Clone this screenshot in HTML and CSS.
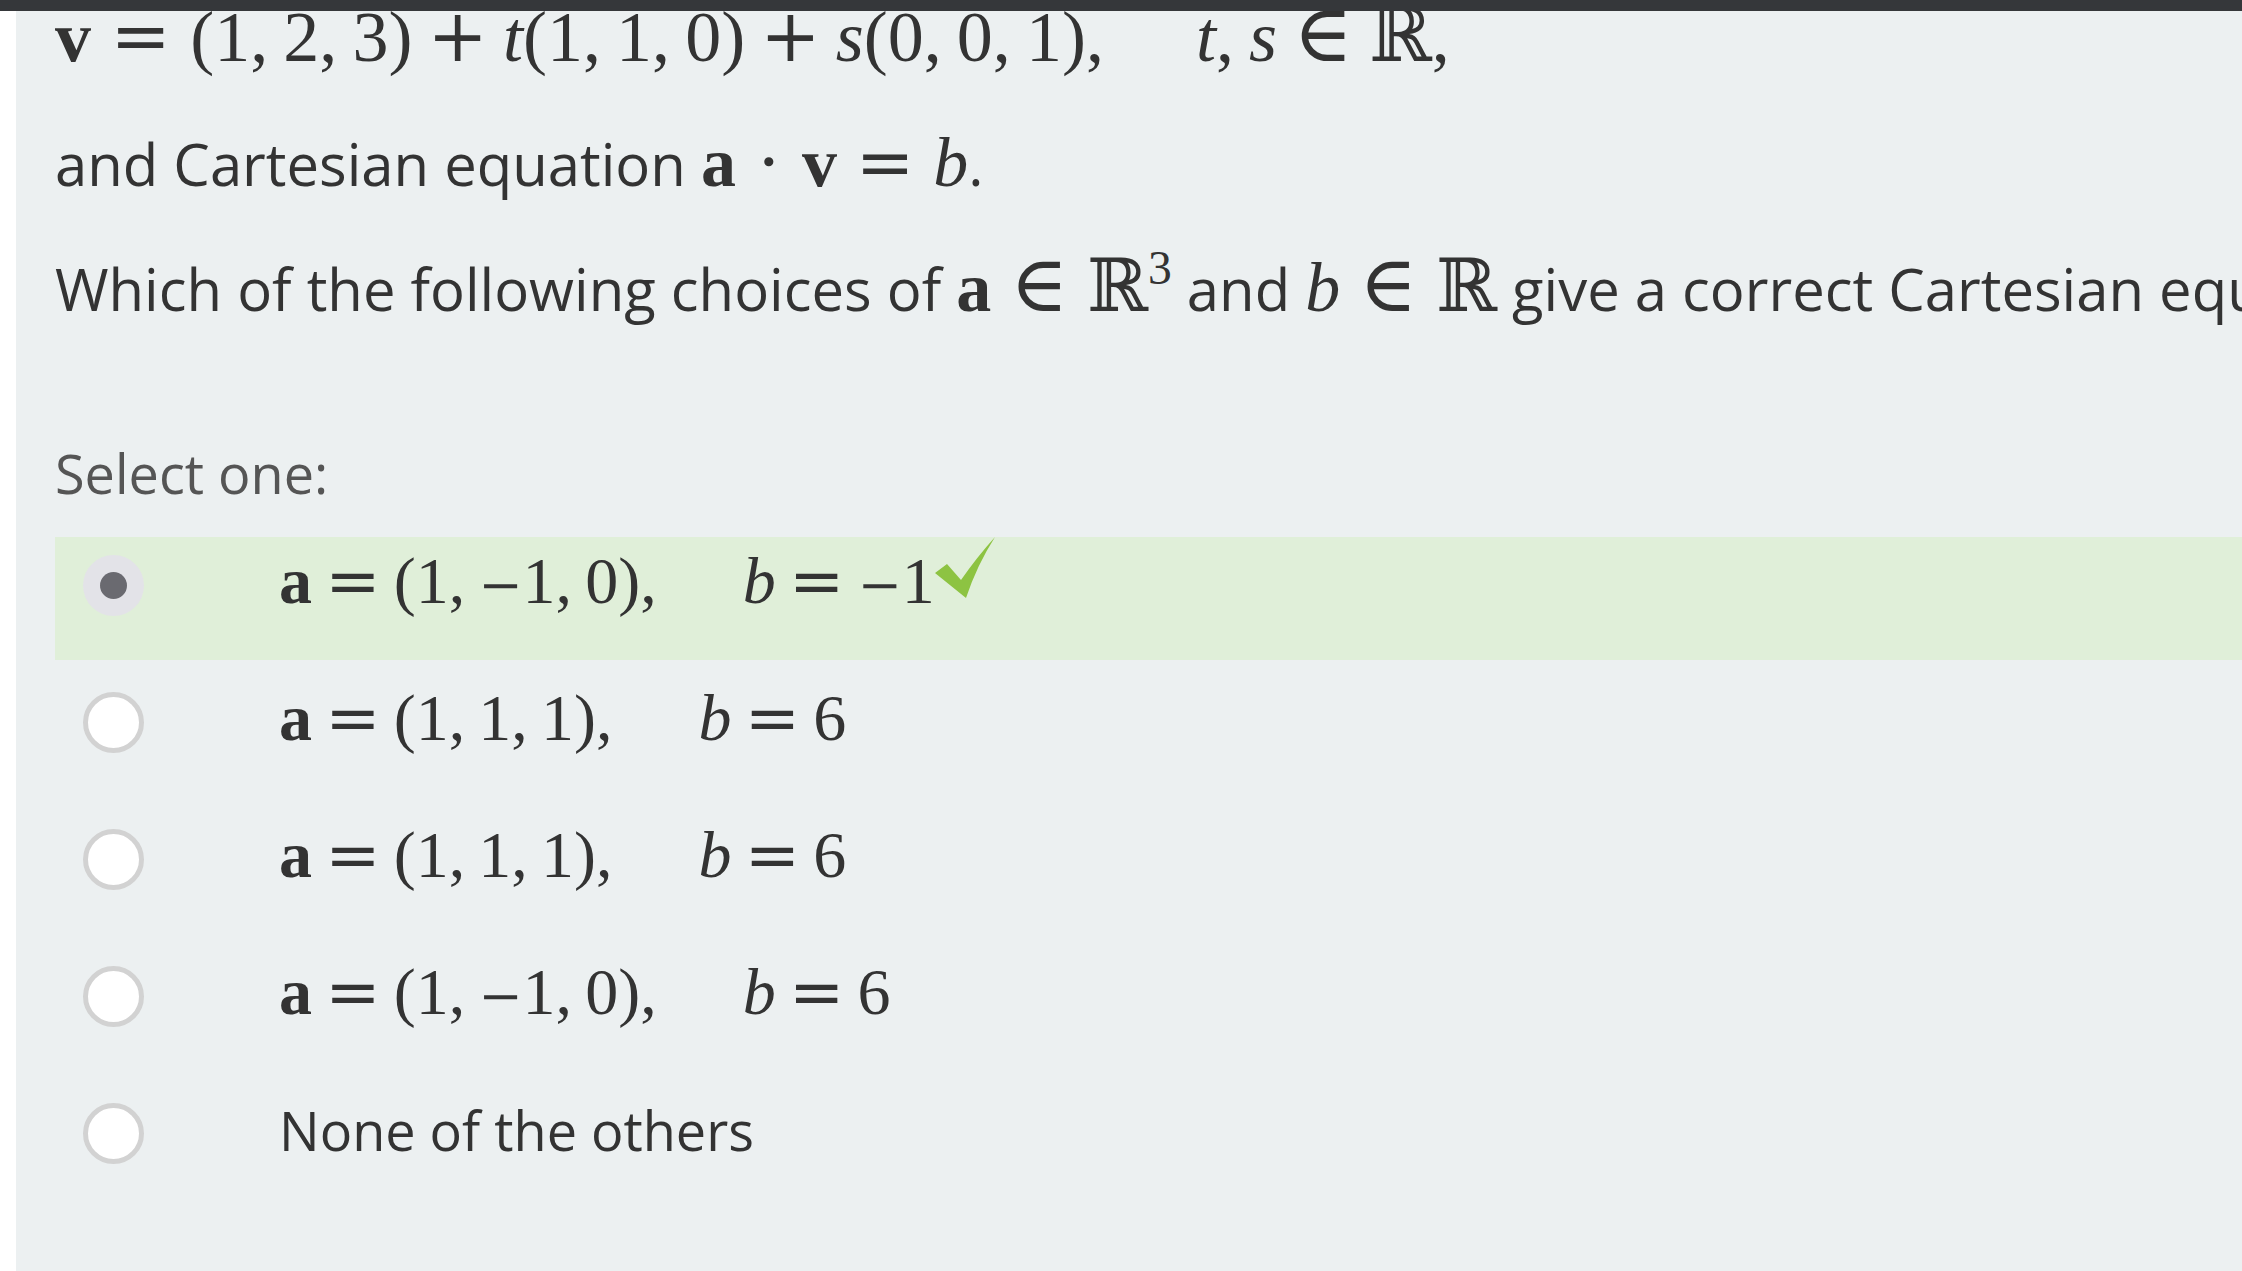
FILE: index.html
```html
<!DOCTYPE html>
<html lang="en">
<head>
<meta charset="utf-8">
<title>Question</title>
<link rel="stylesheet" href="styles.css">
</head>
<body>
<div class="topbar"></div>
<main class="content">
  <div class="qtext">
    <div class="display"><span class="mb">v</span><span class="rel">=</span>(1<span class="cm">,</span>2<span class="cm">,</span>3)<span class="bin">+</span><span class="mi">t</span>(1<span class="cm">,</span>1<span class="cm">,</span>0)<span class="bin">+</span><span class="mi">s</span>(0<span class="cm">,</span>0<span class="cm">,</span>1),<span class="quad"></span><span class="mi">t</span><span class="cm">,</span><span class="mi">s</span><span class="rel elem">∈</span><span class="dbl">ℝ</span>,</div>
    <p class="line">and Cartesian equation <span class="m mq"><span class="mb">a</span><span class="dot">⋅</span><span class="mb">v</span><span class="rel">=</span><span class="mi">b</span></span>.</p>
    <p class="line line3">Which of the following choices of <span class="m mq"><span class="mb">a</span><span class="rel elem">∈</span><span class="dbl">ℝ</span><span class="sup">3</span></span> and <span class="m mq"><span class="mi">b</span><span class="rel elem">∈</span><span class="dbl">ℝ</span></span> give a correct Cartesian equation?</p>
  </div>
  <div class="prompt">Select one:</div>
  <div class="answers">
    <div class="opt correct">
      <span class="radio checked"></span>
      <span class="label"><span class="m ma"><span class="mb">a</span><span class="rel">=</span>(1<span class="cm">,</span><span class="neg">−</span>1<span class="cm">,</span>0),<span class="quad2"></span><span class="mi">b</span><span class="rel">=</span><span class="neg">−</span>1</span><svg class="check" viewBox="0 0 60 61" aria-hidden="true"><path d="M0 36 L12 27 L26 43 Q42 20 60 0 Q42 28 31 61 Z"/></svg></span>
    </div>
    <div class="opt">
      <span class="radio"></span>
      <span class="label"><span class="m ma"><span class="mb">a</span><span class="rel">=</span>(1<span class="cm">,</span>1<span class="cm">,</span>1),<span class="quad2"></span><span class="mi">b</span><span class="rel">=</span>6</span></span>
    </div>
    <div class="opt">
      <span class="radio"></span>
      <span class="label"><span class="m ma"><span class="mb">a</span><span class="rel">=</span>(1<span class="cm">,</span>1<span class="cm">,</span>1),<span class="quad2"></span><span class="mi">b</span><span class="rel">=</span>6</span></span>
    </div>
    <div class="opt">
      <span class="radio"></span>
      <span class="label"><span class="m ma"><span class="mb">a</span><span class="rel">=</span>(1<span class="cm">,</span><span class="neg">−</span>1<span class="cm">,</span>0),<span class="quad2"></span><span class="mi">b</span><span class="rel">=</span>6</span></span>
    </div>
    <div class="opt">
      <span class="radio"></span>
      <span class="label">None of the others</span>
    </div>
  </div>
</main>
</body>
</html>
```
FILE: styles.css
```css
html, body {
  margin: 0;
  padding: 0;
  height: 100%;
  overflow: hidden;
  background: #ffffff;
}

.topbar {
  position: fixed;
  top: 0;
  left: 0;
  right: 0;
  height: 11px;
  background: #35373a;
  z-index: 10;
}

.content {
  margin-left: 16px;
  padding-left: 39px;
  min-height: 100vh;
  background: #ecf0f1;
  color: #333333;
  font-family: "Open Sans", "Liberation Sans", sans-serif;
  overflow: hidden;
  white-space: nowrap;
}

.display {
  height: 72px;
  font-family: "Liberation Serif", serif;
  font-size: 72px;
  line-height: 72px;
}

.line {
  margin: 48px 0 0 0;
  font-size: 58px;
  line-height: 87px;
}

.line3 {
  margin-top: 38px;
}

.m {
  font-family: "Liberation Serif", serif;
  line-height: 0;
  white-space: nowrap;
}

.mq {
  font-size: 70px;
}

.ma {
  font-size: 66px;
}

.mb {
  font-weight: bold;
}

.mi {
  font-style: italic;
}

.rel {
  font-family: "DejaVu Serif", serif;
  margin: 0 0.2em;
}

.display .rel,
.mq .rel {
  margin: 0 0.27em;
}

.elem {
  font-size: 1.12em;
  line-height: 0;
}

.display .rel.elem {
  margin: 0 0.2em;
}

.mq .rel.elem {
  margin: 0 0.24em;
}

.bin {
  font-family: "DejaVu Serif", serif;
  margin: 0 0.21em;
}

.dot {
  font-family: "DejaVu Serif", serif;
  margin: 0 0.3em;
}

.cm {
  margin-right: 0.2em;
}

.display .cm {
  margin-right: 0.21em;
}

.neg {
  font-family: "DejaVu Serif", serif;
  font-size: 0.8em;
}

.dbl {
  font-family: "DejaVu Serif", serif;
  font-size: 1.05em;
  line-height: 0;
}

.sup {
  font-size: 0.68em;
  vertical-align: 27px;
  line-height: 0;
}

.quad {
  display: inline-block;
  width: 92px;
}

.quad2 {
  display: inline-block;
  width: 86px;
}

.prompt {
  margin-top: 101px;
  font-size: 54px;
  line-height: 81px;
  color: #555555;
}

.answers {
  margin-top: 23px;
  display: flex;
  flex-direction: column;
  gap: 14px;
}

.opt {
  box-sizing: border-box;
  height: 123px;
  padding: 18px 0 0 28px;
  display: flex;
  align-items: flex-start;
}

.opt.correct {
  background: #e0efd9;
}

.radio {
  box-sizing: border-box;
  flex: none;
  width: 61px;
  height: 61px;
  border-radius: 50%;
  border: 5px solid #d2d2d2;
  background: #ffffff;
}

.radio.checked {
  border: none;
  background: #e3e3e8;
  display: flex;
  align-items: center;
  justify-content: center;
}

.radio.checked::after {
  content: "";
  width: 27px;
  height: 27px;
  border-radius: 50%;
  background: #6a6a70;
}

.label {
  margin-left: 135px;
  font-size: 54px;
  line-height: 55px;
}

.check {
  width: 60px;
  height: 61px;
  margin: -30px 0 -10px 0;
  vertical-align: 15px;
  fill: #8dc342;
}
```
